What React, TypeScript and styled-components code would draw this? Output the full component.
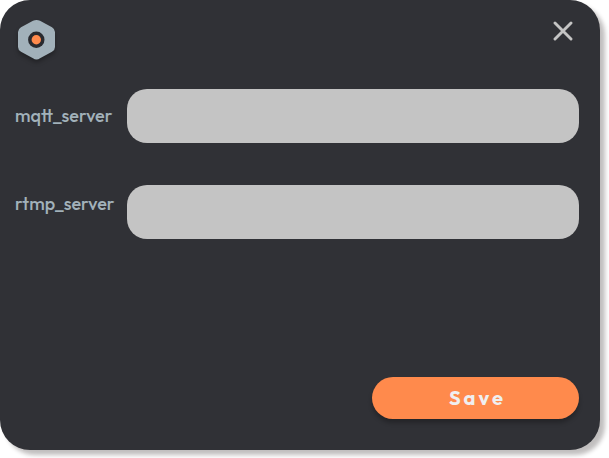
import React, { useState } from "react";
import styled, { createGlobalStyle } from "styled-components";

const GlobalStyle = createGlobalStyle`
  * { box-sizing: border-box; }
  body { margin: 0; min-height: 458px; background: #fff; overflow: hidden; }
`;

const Dialog = styled.form`
  width: 600px;
  height: 450px;
  padding: 19px 21px 31px 15px;
  display: flex;
  flex-direction: column;
  border-radius: 30px;
  background: #303136;
  box-shadow: 5px 5px 4px rgba(33, 24, 24, 0.28);
  font-family: Outfit, Lato, sans-serif;
`;

const Header = styled.header`
  display: flex;
  justify-content: space-between;
  align-items: flex-start;
  height: 70px;
  flex: none;
`;

const Logo = styled.svg`
  display: block;
  margin-left: 3px;
  overflow: visible;
  filter: drop-shadow(0 3px 2px rgba(0, 0, 0, 0.3));
`;

const CloseButton = styled.button`
  display: block;
  padding: 0;
  margin: 2px 6px 0 0;
  border: 0;
  background: none;
  line-height: 0;
`;

const Fields = styled.div`
  display: grid;
  gap: 42px;
`;

const Field = styled.label`
  display: grid;
  grid-template-columns: 112px 452px;
  height: 54px;
`;

const FieldName = styled.span<{ $top: number }>`
  padding-top: ${(p) => p.$top}px;
  color: #a2b1ba;
  font-size: 18px;
  font-weight: 500;
  line-height: 24px;
  white-space: nowrap;
`;

const Input = styled.input`
  width: 100%;
  height: 54px;
  padding: 0 18px;
  border: 0;
  border-radius: 20px;
  outline: 0;
  background: #c4c4c4;
  color: #303136;
  font: 18px Outfit, Lato, sans-serif;
`;

const SaveButton = styled.button`
  align-self: flex-end;
  width: 207px;
  height: 42px;
  margin-top: auto;
  padding: 0 0 0 4px;
  border: 0;
  border-radius: 21px;
  background: #ff8a4c;
  box-shadow: 0 4px 4px rgba(0, 0, 0, 0.25);
  color: #f0eff0;
  font: 700 20px/24px Outfit, Lato, sans-serif;
  letter-spacing: 3px;
`;

const fields = [
  { name: "mqtt_server", top: 15 },
  { name: "rtmp_server", top: 7 },
];

export default function App() {
  const [values, setValues] = useState<Record<string, string>>({});

  return (
    <>
      <GlobalStyle />
      <Dialog onSubmit={(e) => e.preventDefault()}>
        <Header>
          <Logo width="37" height="41" viewBox="0 0 37 41">
            <path
              d="M15 1.8 Q18.5 .2 22 1.8 L34 8.2 Q37 10 37 13 V28 Q37 31 34 32.8 L22 39.2 Q18.5 41.8 15 39.2 L3 32.8 Q0 31 0 28 V13 Q0 10 3 8.2 Z"
              fill="#a2b1ba"
            />
            <circle cx="18.3" cy="20.7" r="8.2" fill="#292a2f" />
            <circle cx="18.3" cy="20.7" r="4.7" fill="#ff8a4c" />
          </Logo>
          <CloseButton type="button" aria-label="Close">
            <svg width="20" height="20" viewBox="0 0 20 20">
              <path
                d="M2 2 18 18M18 2 2 18"
                stroke="#c4c4c4"
                strokeWidth="2.9"
                strokeLinecap="round"
              />
            </svg>
          </CloseButton>
        </Header>
        <Fields>
          {fields.map(({ name, top }) => (
            <Field key={name}>
              <FieldName $top={top}>{name}</FieldName>
              <Input
                value={values[name] ?? ""}
                onChange={(e) => setValues({ ...values, [name]: e.target.value })}
              />
            </Field>
          ))}
        </Fields>
        <SaveButton type="submit">Save</SaveButton>
      </Dialog>
    </>
  );
}
